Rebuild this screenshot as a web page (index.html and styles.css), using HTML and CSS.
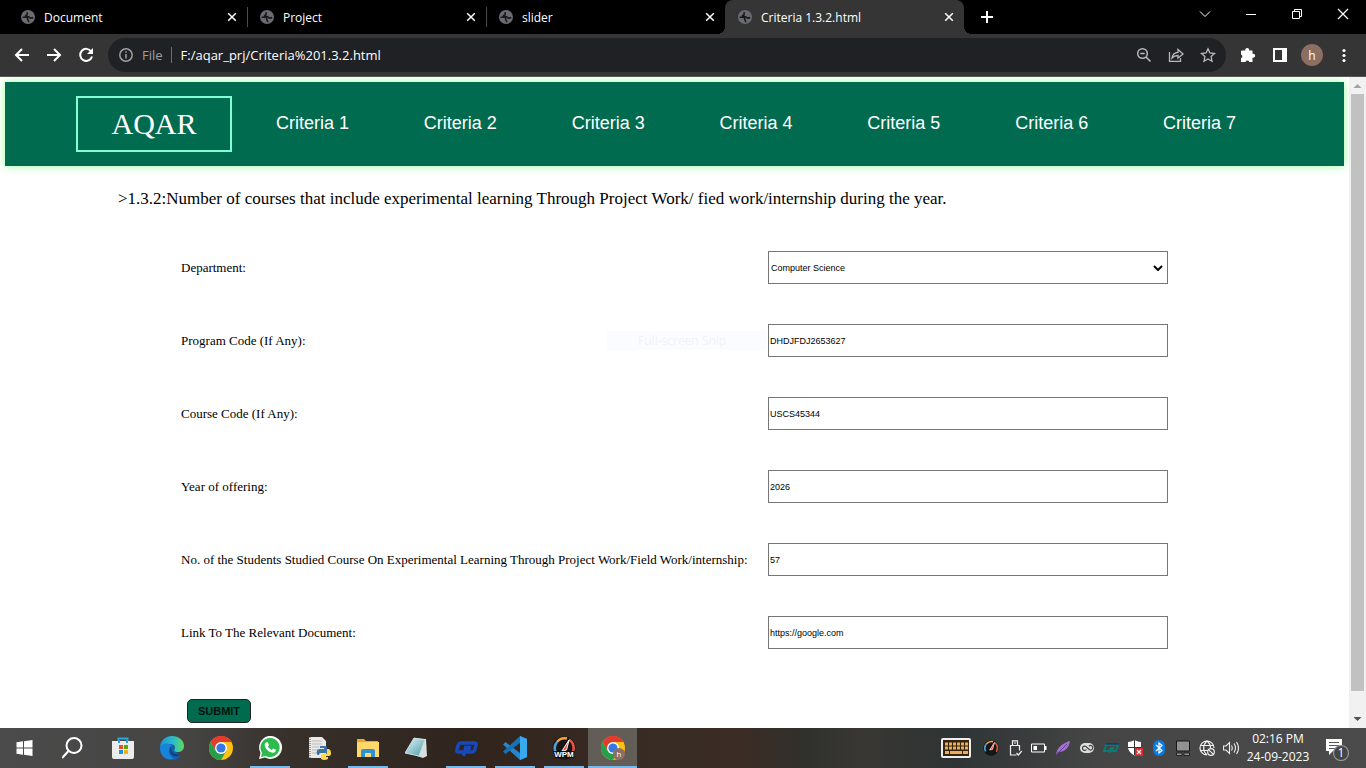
FILE: index.html
```html
<!DOCTYPE html>
<html lang="en">
<head>
<meta charset="utf-8">
<title>Criteria 1.3.2.html</title>
<link rel="stylesheet" href="styles.css">
</head>
<body>
<svg class="defs" aria-hidden="true">
  <symbol id="globe" viewBox="0 0 14 14"><circle cx="7" cy="7" r="7" fill="#6b6c70"/><path d="M1.600 7.200h3.600c1.200 0 1.500 1 1.500 2s1 1 1 3M6.500 2.200c-1 1.300.2 1.500-.6 2.500-.8.800-1.600.6-1.400 1.500.8.600 3 .1 3.900 1 .9 1.300 2.600.9 3.800.4" fill="none" stroke="#17181a" stroke-width="1.600"/></symbol>
  <symbol id="close" viewBox="0 0 10 10"><path d="M1.200 1.200l7.600 7.600M8.800 1.200L1.200 8.800" stroke="#fff" stroke-width="1.500"/></symbol>
</svg>

<header class="tabbar">
  <div class="tab"><svg class="globe"><use href="#globe"/></svg><span class="tab-name">Document</span><button class="tab-close" aria-label="Close Document"><svg><use href="#close"/></svg></button></div>
  <div class="tab ruled"><svg class="globe"><use href="#globe"/></svg><span class="tab-name">Project</span><button class="tab-close" aria-label="Close Project"><svg><use href="#close"/></svg></button></div>
  <div class="tab ruled"><svg class="globe"><use href="#globe"/></svg><span class="tab-name">slider</span><button class="tab-close" aria-label="Close slider"><svg><use href="#close"/></svg></button></div>
  <div class="tab active"><svg class="globe"><use href="#globe"/></svg><span class="tab-name">Criteria 1.3.2.html</span><button class="tab-close" aria-label="Close Criteria 1.3.2.html"><svg><use href="#close"/></svg></button></div>
  <button class="new-tab" aria-label="New tab"><svg width="12" height="12" viewBox="0 0 12 12"><path d="M6 0v12M0 6h12" stroke="#fff" stroke-width="2"/></svg></button>
  <div class="window-buttons">
    <button aria-label="Search tabs"><svg width="12" height="12" viewBox="0 0 12 12"><path d="M1 3.500l5 5 5-5" fill="none" stroke="#fff"/></svg></button>
    <button aria-label="Minimize"><svg width="12" height="12" viewBox="0 0 12 12"><path d="M1 6.500h10" stroke="#fff"/></svg></button>
    <button aria-label="Restore"><svg width="12" height="12" viewBox="0 0 12 12"><path d="M1.500 3.500h7v7h-7zM3.500 3.500v-2h7v7h-2" fill="none" stroke="#fff"/></svg></button>
    <button aria-label="Close window"><svg width="12" height="12" viewBox="0 0 12 12"><path d="M1 1l10 10M11 1L1 11" stroke="#fff" stroke-width="1.200"/></svg></button>
  </div>
</header>

<div class="toolbar">
  <button class="tool" aria-label="Back"><svg width="16" height="16" viewBox="0 0 16 16"><path d="M15 8H2M8 2L2 8l6 6" fill="none" stroke="#fff" stroke-width="2"/></svg></button>
  <button class="tool" aria-label="Forward"><svg width="16" height="16" viewBox="0 0 16 16"><path d="M1 8h13M8 2l6 6-6 6" fill="none" stroke="#fff" stroke-width="2"/></svg></button>
  <button class="tool" aria-label="Reload"><svg width="16" height="16" viewBox="0 0 16 16"><path d="M13.200 4.500A6 6 0 1 0 14 9.500" fill="none" stroke="#fff" stroke-width="2"/><path d="M15 1v6H9z" fill="#fff"/></svg></button>
  <div class="address">
    <svg width="14" height="14" viewBox="0 0 14 14"><circle cx="7" cy="7" r="6.200" fill="none" stroke="#9aa0a6" stroke-width="1.500"/><path d="M7 6v4.500M7 3.200v1.600" stroke="#9aa0a6" stroke-width="1.500"/></svg>
    <span class="scheme">File</span>
    <input class="url" type="text" aria-label="Address" value="F:/aqar_prj/Criteria%201.3.2.html">
    <button class="tool" aria-label="Zoom"><svg width="16" height="16" viewBox="0 0 16 16"><circle cx="6.500" cy="6.500" r="4.800" fill="none" stroke="#b8babd" stroke-width="1.500"/><path d="M10 10l4.500 4.500M4.300 6.500h4.400" stroke="#b8babd" stroke-width="1.500"/></svg></button>
    <button class="tool" aria-label="Share"><svg width="16" height="16" viewBox="0 0 16 16"><path d="M1.500 5v9.300h11v-3M4 11c.5-4 2.500-5.500 6-5.700V2.500l5 4.500-5 4.200V8.500C7.500 8.500 5.800 9 4 11z" fill="none" stroke="#b8babd" stroke-width="1.300"/></svg></button>
    <button class="tool" aria-label="Bookmark"><svg width="16" height="16" viewBox="0 0 16 16"><path d="M8 1.800l1.900 4.200 4.600.5-3.400 3.100.9 4.600L8 11.900l-4 2.300.9-4.600L1.500 6.500l4.600-.5z" fill="none" stroke="#b8babd" stroke-width="1.300"/></svg></button>
  </div>
  <button class="tool" aria-label="Extensions"><svg width="16" height="16" viewBox="0 0 16 16"><path d="M2 3.500h3.300a2 2 0 1 1 3.800 0H12.500v3.300a2 2 0 1 1 0 3.800V15H9.300a2 2 0 0 0-3.800 0H1v-3.800a2 2 0 0 0 0-3.800V4.500a1 1 0 0 1 1-1z" fill="#fff"/></svg></button>
  <button class="tool" aria-label="Side panel"><svg width="16" height="16" viewBox="0 0 16 16"><path d="M1 1h14v14H1zM3 3v10h7V3z" fill="#fff" fill-rule="evenodd"/></svg></button>
  <button class="tool avatar" aria-label="Profile">h</button>
  <button class="tool" aria-label="Menu"><svg width="16" height="16" viewBox="0 0 16 16" fill="#fff"><circle cx="8" cy="3.500" r="1.600"/><circle cx="8" cy="8.500" r="1.600"/><circle cx="8" cy="13.500" r="1.600"/></svg></button>
</div>

<div class="viewport">
  <main class="page">
    <nav class="nav">
      <a class="logo" href="#">AQAR</a>
      <div class="links">
        <a href="#">Criteria 1</a><a href="#">Criteria 2</a><a href="#">Criteria 3</a><a href="#">Criteria 4</a><a href="#">Criteria 5</a><a href="#">Criteria 6</a><a href="#">Criteria 7</a>
      </div>
    </nav>
    <p class="question">&gt;1.3.2:Number of courses that include experimental learning Through Project Work/ fied work/internship during the year.</p>
    <div class="snip">Full-screen Snip</div>
    <form class="form">
      <label for="dept">Department:</label>
      <select id="dept"><option>Computer Science</option></select>
      <label for="program">Program Code (If Any):</label>
      <input id="program" type="text" value="DHDJFDJ2653627">
      <label for="course">Course Code (If Any):</label>
      <input id="course" type="text" value="USCS45344">
      <label for="year">Year of offering:</label>
      <input id="year" type="text" value="2026">
      <label for="students">No. of the Students Studied Course On Experimental Learning Through Project Work/Field Work/internship:</label>
      <input id="students" type="text" value="57">
      <label for="link">Link To The Relevant Document:</label>
      <input id="link" type="text" value="https://google.com">
      <button class="submit" type="button">SUBMIT</button>
    </form>
  </main>
  <div class="scrollbar">
    <svg width="17" height="17" viewBox="0 0 17 17"><path d="M4.500 11h8L8.500 7z" fill="#a3a3a3"/></svg>
    <div class="thumb"></div>
    <svg width="17" height="17" viewBox="0 0 17 17"><path d="M4.500 6h8l-4 4z" fill="#505050"/></svg>
  </div>
</div>

<footer class="taskbar">
  <div class="apps">
    <button class="app" aria-label="Start"><svg width="24" height="24" viewBox="0 0 24 24"><path d="M3.500 6.300l6.500-1v6.200H3.500zM11 5.200L19.500 4v7.500H11zM3.500 12.500H10v6.200l-6.500-.9zM11 12.500h8.500V20L11 18.800z" fill="#fff"/></svg></button>
    <button class="app" aria-label="Search"><svg width="24" height="24" viewBox="0 0 24 24"><circle cx="12" cy="9.500" r="7.500" fill="none" stroke="#fff" stroke-width="2"/><path d="M6.500 15L0 22" stroke="#fff" stroke-width="2.200"/></svg></button>
    <button class="app" aria-label="Store"><svg width="24" height="24" viewBox="0 0 24 24"><path d="M7.500 6V2.500h9V6" fill="none" stroke="#2aa5dc" stroke-width="2"/><path d="M1 5h22v16a2 2 0 0 1-2 2H3a2 2 0 0 1-2-2z" fill="#ececec"/><path d="M8 4.500v2.500M16 4.500v2.500" stroke="#2aa5dc" stroke-width="2"/><path d="M8 9h4v4H8z" fill="#e8502a"/><path d="M13 9h4v4h-4z" fill="#5da60c"/><path d="M8 14h4v4H8z" fill="#1696dd"/><path d="M13 14h4v4h-4z" fill="#f3ae16"/></svg></button>
    <button class="app" aria-label="Edge"><svg width="24" height="24" viewBox="0 0 24 24"><defs><linearGradient id="edge"><stop stop-color="#1996df"/><stop offset=".6" stop-color="#2ec0bf"/><stop offset="1" stop-color="#63d957"/></linearGradient></defs><path d="M0 12a12 12 0 0 0 20.500 8.500L16 16l-3-9z" fill="#1260b4"/><path d="M0 12C0 5 5 0 12 0c7 0 12 4.500 12 10 0 4-3 6-6 6-3.500 0-4.500-1.200-3.500-2.500 1.500-2.500-.5-5.500-4-5.500C5 8 1 9.500 0 12z" fill="url(#edge)"/><path d="M0 12c1-5 9-6 12-2-5 1-4 10 2 12.500C7 26 0 20 0 12z" fill="#1784d8"/><path d="M11.500 10.200c-2 4 1.500 9.300 9 8-3 3-7.500 2.500-9.500-.5-1.500-2.500-1.300-6 .5-7.500z" fill="#123e75"/></svg></button>
    <button class="app" aria-label="Chrome"><svg width="24" height="24" viewBox="0 0 24 24"><g id="chrome"><circle cx="12" cy="12" r="12" fill="#fbc116"/><path d="M1.600 6A12 12 0 0 1 22.400 6H12l-5.200 9z" fill="#e33b2e"/><path d="M1.600 6A12 12 0 0 0 12 24l5.200-9H6.800z" fill="#269f4a"/><path d="M1.600 6A12 12 0 0 1 22.400 6H12z" fill="#e33b2e"/><circle cx="12" cy="12" r="6" fill="#fff"/><circle cx="12" cy="12" r="4.600" fill="#3478e5"/></g></svg></button>
    <button class="app open" aria-label="WhatsApp"><svg width="24" height="24" viewBox="0 0 24 24"><path d="M1 23l1.500-6A11.500 11.500 0 1 1 7 21.500z" fill="#fff"/><path d="M3 21l1-4.200A9.600 9.600 0 1 1 7.500 20z" fill="#2dbb4d"/><path d="M8 6.500l1.800-.2L11 9l-1 1.500c1 1.800 2 2.700 3.700 3.500l1.500-1.500 2.700 1.300c0 2-1.500 3.200-3.500 2.900C10.500 16 7 12.500 6.700 9c0-1 .5-2 1.300-2.500z" fill="#fff"/></svg></button>
    <button class="app" aria-label="Python file"><svg width="24" height="24" viewBox="0 0 24 24"><path d="M2 1h13l4 4v17H2z" fill="#e9e9e7"/><path d="M5 5h10M5 8h10M5 11h7M5 14h6M5 17h6" stroke="#bbb"/><path d="M3 1v21" stroke="#555" stroke-dasharray="1 1"/><path d="M13 10h5q2 0 2 2v5h-6q-2 0-2 2h-1q-2-1-1-4 0-2 3-2h4v-1h-4z" fill="#3974a8"/><path d="M20 13h2q2 1 2 4t-2 3h-4v1h3v2q-4 2-7 0v-4q0-1 2-1h3q1 0 1-2z" fill="#ffd94d"/></svg></button>
    <button class="app open" aria-label="File Explorer"><svg width="24" height="24" viewBox="0 0 24 24"><path d="M1 3h7l2 2h12v16H1z" fill="#e6a92c"/><path d="M1 6h22v15H1z" fill="#ffd76a"/><path d="M5 21v-6q0-2 2-2h10q2 0 2 2v6h-4v-4H9v4z" fill="#2d91d2"/></svg></button>
    <button class="app" aria-label="Notepad"><svg width="24" height="24" viewBox="0 0 24 24"><defs><linearGradient id="note" x2="1" y2="1"><stop stop-color="#e1f7f8"/><stop offset="1" stop-color="#4f9aaa"/></linearGradient></defs><path d="M9 2l12 1 1 17-4 2-6-2z" fill="#d9dfdf"/><path d="M9 2l11 2-6 16-14-3z" fill="url(#note)" stroke="#cae0e3"/></svg></button>
    <button class="app open" aria-label="Messenger"><svg width="24" height="24" viewBox="0 0 24 24"><path d="M10 16H3.500q-1 0-.7-1.500l1-4Q4.500 7 7 7h13.500q2 0 1.500 2l-1.200 4.500Q20 16 18 16h-4l1.200-4.500h-3.500L9.500 20" fill="none" stroke="#1749b8" stroke-width="3.500"/></svg></button>
    <button class="app open" aria-label="Visual Studio Code"><svg width="24" height="24" viewBox="0 0 24 24"><path d="M17 0l7 3v18l-7 3L0 8.500 2.500 6 17 17z" fill="#2586ca"/><path d="M17 0v7L2.500 18 0 15.500z" fill="#1671b5"/><path d="M17 0l7 3v18l-7 3z" fill="#38a8ef"/></svg></button>
    <button class="app open" aria-label="WPM test"><svg width="24" height="24" viewBox="0 0 24 24"><g id="gauge"><circle cx="12" cy="12" r="11.500" fill="#151515"/><path d="M4 17a10 10 0 0 1 1-11" fill="none" stroke="#4aa4d6" stroke-width="2.500"/><path d="M5 6a10 10 0 0 1 10-3.500" fill="none" stroke="#f6a23e" stroke-width="2.500"/><path d="M17 3.500a10 10 0 0 1 3 14" fill="none" stroke="#e8553f" stroke-width="2.500"/><path d="M17 4l-2.500 10-4.500 1z" fill="#f5453b" stroke="#fff"/></g><text x="12" y="21" text-anchor="middle" class="wpm">WPM</text></svg></button>
    <button class="app open current" aria-label="Chrome, h"><svg width="24" height="24" viewBox="0 0 24 24"><use href="#chrome"/><circle cx="18" cy="18" r="6" fill="#8d6e63"/><text x="18" y="21" text-anchor="middle" class="badge">h</text></svg></button>
  </div>
  <div class="tray">
    <button class="keyboard" aria-label="Touch keyboard"><svg width="30" height="20" viewBox="0 0 30 20"><rect x="1" y="1" width="28" height="18" rx="1" fill="#36240f" stroke="#eee" stroke-width="2"/><path d="M4 6h23M4 10h23" stroke="#e8ae5a" stroke-width="3" stroke-dasharray="3 1"/><path d="M4 14.500h4M9 14.500h12M22 14.500h5" stroke="#e8ae5a" stroke-width="3"/></svg></button>
    <button aria-label="Typing speed"><svg width="16" height="16" viewBox="0 0 24 24"><use href="#gauge"/></svg></button>
    <button aria-label="USB"><svg width="16" height="16" viewBox="0 0 16 16"><path d="M5.500 5V.8h5V5M7 3h2M9.500 15h-6V5.500h9v5M9.500 13l1.800 2 3.500-4" fill="none" stroke="#eee" stroke-width="1.200"/></svg></button>
    <button aria-label="Battery"><svg width="16" height="16" viewBox="0 0 16 16"><path d="M.5 4h13v8H.5z" fill="none" stroke="#fff"/><path d="M2.500 6h3.500v4H2.500zM14 6h1.500v4H14z" fill="#fff"/></svg></button>
    <button aria-label="Feather"><svg width="16" height="16" viewBox="0 0 16 16"><path d="M1 15C2 7 8 3 15 1c-1 6-4 11-12 11z" fill="#a570d0"/><path d="M1 15L12 4" stroke="#673b91"/></svg></button>
    <button aria-label="Creative Cloud"><svg width="16" height="16" viewBox="0 0 16 16"><rect x="1" y="3" width="14" height="10" rx="5" fill="#ddd"/><path d="M7.500 9.500a2.200 2.200 0 1 1-.5-3l3.500 3.200a2.200 2.200 0 1 0-.5-3.500" fill="none" stroke="#444" stroke-width="1.200"/></svg></button>
    <button aria-label="Messenger"><svg width="16" height="16" viewBox="0 0 16 16"><path d="M7 11H1l2-6h12l-2 6H9l1-3H8l-1.500 5" fill="none" stroke="#087a78" stroke-width="2"/><path d="M3 4h13" stroke="#14295f"/></svg></button>
    <button aria-label="Security"><svg width="16" height="16" viewBox="0 0 16 16"><path d="M7.500 0Q4 2 1 2v6q1 5 6.500 7.500Q13 13 14 8V2Q11 2 7.500 0z" fill="#fff"/><path d="M7.500 0v15M1 7.500h13" stroke="#333"/><path d="M8 8h8v8H8z" fill="#d92b2b"/><path d="M10 10l4 4M14 10l-4 4" stroke="#fff" stroke-width="1.200"/></svg></button>
    <button aria-label="Bluetooth"><svg width="16" height="16" viewBox="0 0 16 16"><rect x="2" width="12" height="16" rx="6" fill="#087be4"/><path d="M5 5l6 5.500L8 13V3l3 2.500L5 11" fill="none" stroke="#fff" stroke-width="1.200"/></svg></button>
    <button aria-label="Touchpad"><svg width="16" height="16" viewBox="0 0 16 16"><path d="M1.500 1h13v10h-13z" fill="#929292" stroke="#171717"/><path d="M1.500 13h5.500v2.500H1.500zM9 13h5.500v2.500H9z" fill="#999" stroke="#222"/></svg></button>
    <button aria-label="Network"><svg width="16" height="16" viewBox="0 0 16 16"><path d="M15 8a7 7 0 1 0-7 7M8 1C3.500 5 3.500 11 8 15M8 1c2.500 2 3.500 4.500 3.500 7M1.500 5.500h13M1.500 10.500H9" fill="none" stroke="#eee" stroke-width="1.200"/><circle cx="12" cy="12" r="3.300" fill="#444" stroke="#eee" stroke-width="1.200"/><path d="M9.800 9.800l4.400 4.400" stroke="#eee" stroke-width="1.200"/></svg></button>
    <button aria-label="Volume"><svg width="16" height="16" viewBox="0 0 16 16"><path d="M.5 6v4h2.500l3.500 3.500v-11L3 6zM8.500 5.500q1.500 2.500 0 5M11 3.500q3 4.500 0 9M13.500 2q4 6 0 12" fill="none" stroke="#eee" stroke-width="1.100"/></svg></button>
    <div class="clock"><time>02:16 PM</time><time>24-09-2023</time></div>
    <button class="notices" aria-label="Notifications, 1"><svg width="26" height="26" viewBox="0 0 26 26"><path d="M1 4h16v12h-9l-4 4v-4H1z" fill="#fff"/><path d="M4 7.500h10M4 10.500h10M4 13.500h7" stroke="#555"/><circle cx="16" cy="18" r="7.500" fill="#454545" stroke="#999" stroke-width="1.200"/><text x="16" y="22" text-anchor="middle" class="count">1</text></svg></button>
  </div>
</footer>
</body>
</html>
```
FILE: styles.css
```css
* { box-sizing: border-box; }
body {
  margin: 0;
  height: 100vh;
  display: flex;
  flex-direction: column;
  overflow: hidden;
  background: #fff;
  font-family: "Open Sans", "Noto Sans", sans-serif;
}
button { border: 0; padding: 0; background: none; color: inherit; font: inherit; display: grid; place-items: center; }
a { color: inherit; text-decoration: none; }
svg { display: block; flex: none; }
.defs { position: absolute; width: 0; height: 0; }

.tabbar { display: flex; align-items: stretch; flex: none; height: 34px; padding-left: 8px; background: #000; color: #fff; }
.tab { flex: 0 1 239px; display: flex; align-items: center; gap: 9px; padding: 0 10px 0 13px; font-size: 12px; }
.ruled { background: linear-gradient(#4b4b4b, #4b4b4b) left center / 1px 20px no-repeat; }
.globe { width: 14px; height: 14px; }
.tab-name { flex: 1; white-space: nowrap; }
.tab-close svg { width: 10px; height: 10px; }
.active { position: relative; background: #353535; border-radius: 8px 8px 0 0; }
.active::before, .active::after { content: ""; position: absolute; bottom: 0; width: 8px; height: 8px; }
.active::before { right: 100%; background: radial-gradient(circle at 0 0, #000 8px, #353535 8px); }
.active::after { left: 100%; background: radial-gradient(circle at 100% 0, #000 8px, #353535 8px); }
.new-tab { width: 46px; }
.window-buttons { margin-left: auto; display: flex; height: 28px; }
.window-buttons button { width: 46px; }

.toolbar { flex: none; display: flex; align-items: center; height: 43px; padding: 0 6px; background: #353535; border-bottom: 1px solid #555; color: #fff; }
.tool { width: 32px; height: 32px; flex: none; }
.address { flex: 1; display: flex; align-items: center; height: 34px; margin: 0 6px; padding: 0 2px 0 11px; border-radius: 17px; background: #202124; }
.scheme { margin-left: 9px; padding-right: 8px; border-right: 1px solid #6b6c70; color: #9aa0a6; font-size: 13px; line-height: 16px; }
.url { flex: 1; min-width: 0; padding: 0 9px; border: 0; background: none; color: #fff; font: 13px "Open Sans", sans-serif; }
.avatar { width: 22px; height: 22px; margin: 0 5px; border-radius: 50%; background: #8d6e63; font-size: 12px; }

.viewport { flex: 1; min-height: 0; display: flex; }
.page { position: relative; flex: 1; min-width: 0; padding: 5px; overflow: hidden; font-family: "Liberation Serif", serif; color: #000; }
.nav { display: flex; align-items: center; height: 84px; padding: 0 108px 0 71px; background: #016b50; box-shadow: 0 0 8px #9f9; color: #fff; }
.logo { width: 156px; border: 2px solid #7fffd4; font-size: 30px; line-height: 52px; text-align: center; }
.links { flex: 1; display: flex; justify-content: space-between; margin-left: 44px; padding-bottom: 2px; font: 18px "Liberation Sans", sans-serif; }
.question { margin: 23px 0 0 113px; font-size: 17px; line-height: 20px; }
.form { position: relative; display: grid; grid-template-columns: 584px 400px; justify-content: center; align-items: center; gap: 40px 3px; margin-top: 42px; font-size: 13px; }
.form input, .form select { width: 100%; height: 33px; padding: 0 1px; border: 1px solid #767676; border-radius: 0; background-color: #fff; color: #000; font: 9px "Liberation Sans", sans-serif; }
.form select { padding: 0 0 0 2px; appearance: none; background: url('data:image/svg+xml,<svg xmlns="http://www.w3.org/2000/svg" width="10" height="6"><path d="M1 1l4 4 4-4" fill="none" stroke="black" stroke-width="2"/></svg>') right 4px center no-repeat #fff; }
.submit { justify-self: start; width: 64px; height: 24px; margin: 10px 6px; border: 1px solid #222; border-radius: 5px; background: #016b50; color: #00120c; font: bold 11px "Liberation Sans", sans-serif; }
.snip { position: absolute; left: 45%; top: 254px; width: 160px; padding-left: 31px; background: #fbfcff; color: #f1f2f5; font: 12px/19px "Open Sans", sans-serif; }

.scrollbar { flex: none; width: 17px; display: flex; flex-direction: column; background: #f1f1f1; }
.thumb { flex: 1; margin: 0 2px 20px; background: #c1c1c1; }

.taskbar { flex: none; display: flex; justify-content: space-between; height: 40px; background: linear-gradient(90deg, #4b4b4b 0, #454443 14%, #37302b 21%, #30241d 34%, #382c24 48%, #3b2c24 54%, #30302c 59%, #383733 63%, #2e3434 70%, #454545 80%, #4b4b4b 100%); color: #fff; }
.apps { display: flex; }
.app { width: 49px; height: 40px; }
.open { background: linear-gradient(#76b9ed, #76b9ed) center bottom / 40px 2px no-repeat; }
.current { background: linear-gradient(#76b9ed, #76b9ed) center bottom / 100% 2px no-repeat #635d58; }
.wpm { fill: #fff; stroke: #111; stroke-width: 2px; paint-order: stroke; font: bold 8px "Liberation Sans", sans-serif; }
.badge { fill: #fff; font: 8px "Open Sans", sans-serif; }
.tray { display: flex; align-items: center; padding-right: 3px; }
.tray button { width: 24px; height: 40px; }
.tray .keyboard { width: 46px; }
.clock { display: flex; flex-direction: column; width: 70px; text-align: center; font-size: 12px; line-height: 18px; }
.tray .notices { width: 50px; }
.count { fill: #fff; font: 12px "Open Sans", sans-serif; }
```
